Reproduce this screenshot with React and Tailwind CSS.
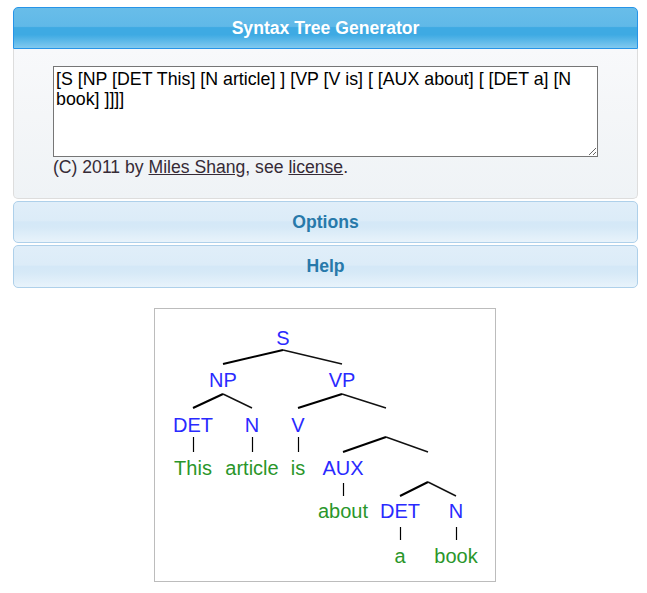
import React from "react";

const BLUE = "#2a2aff";
const GREEN = "#2a962a";

function Tree() {
  const labels = [
    { t: "S", x: 283, y: 345, c: BLUE },
    { t: "NP", x: 223, y: 387, c: BLUE },
    { t: "VP", x: 342, y: 387, c: BLUE },
    { t: "DET", x: 193, y: 432, c: BLUE },
    { t: "N", x: 252, y: 432, c: BLUE },
    { t: "V", x: 298, y: 432, c: BLUE },
    { t: "This", x: 193, y: 475, c: GREEN },
    { t: "article", x: 252, y: 475, c: GREEN },
    { t: "is", x: 298, y: 475, c: GREEN },
    { t: "AUX", x: 343, y: 475, c: BLUE },
    { t: "about", x: 343, y: 518, c: GREEN },
    { t: "DET", x: 400, y: 518, c: BLUE },
    { t: "N", x: 456, y: 518, c: BLUE },
    { t: "a", x: 400, y: 563, c: GREEN },
    { t: "book", x: 456, y: 563, c: GREEN },
  ];
  const thick = [
    [283, 350, 223, 364],
    [223, 394, 193, 408],
    [342, 394, 298, 408],
    [386, 437, 343, 452],
    [428, 482, 400, 496],
  ];
  const thin = [
    [283, 350, 342, 364],
    [223, 394, 252, 408],
    [342, 394, 386, 408],
    [386, 437, 428, 452],
    [428, 482, 456, 496],
  ];
  const vert = [
    [193, 437, 193, 452],
    [252, 437, 252, 452],
    [298, 437, 298, 452],
    [343, 483, 343, 496],
    [400, 527, 400, 540],
    [456, 527, 456, 540],
  ];
  return (
    <svg width="340" height="272" viewBox="0 0 340 272">
      <g transform="translate(-155,-309)">
        {thick.map((l, i) => (
          <line key={"a" + i} x1={l[0]} y1={l[1]} x2={l[2]} y2={l[3]} stroke="#000" strokeWidth="2" />
        ))}
        {thin.map((l, i) => (
          <line key={"b" + i} x1={l[0]} y1={l[1]} x2={l[2]} y2={l[3]} stroke="#111" strokeWidth="1.4" />
        ))}
        {vert.map((l, i) => (
          <line key={"c" + i} x1={l[0] + 0.5} y1={l[1]} x2={l[2] + 0.5} y2={l[3]} stroke="#000" strokeWidth="1.2" />
        ))}
        {labels.map((l, i) => (
          <text
            key={"t" + i}
            x={l.x}
            y={l.y}
            textAnchor="middle"
            fill={l.c}
            fontSize="20"
            fontFamily="'Liberation Sans', Arial, sans-serif"
          >
            {l.t}
          </text>
        ))}
      </g>
    </svg>
  );
}

export default function App() {
  return (
    <div className="w-[647px] h-[593px] bg-white font-['Liberation_Sans',Arial,sans-serif] text-[17.6px]">
      <div className="pt-[7px] pl-[13px] w-[638px]">
        <div className="h-[42px] border border-[#2694e8] rounded-t-[5px] bg-[linear-gradient(to_bottom,#68bde9_0%,#60b9e8_46%,#3eaae3_49%,#3eaae3_67%,#80c9ef_100%)] flex items-center justify-center text-white font-bold">
          Syntax Tree Generator
        </div>
        <div className="h-[150px] border border-t-0 border-[#dddddd] rounded-b-[5px] bg-[linear-gradient(to_bottom,#f8f9fb_0%,#f4f6f8_45%,#eff3f6_100%)] pl-[39px] pr-[40px] pt-[17px] text-[#362b36]">
          <textarea
            className="block w-[545px] h-[91px] border border-[#767676] bg-white px-[2px] py-[2px] text-black text-[17.8px] leading-[20px] resize-y outline-none"
            defaultValue="[S [NP [DET This] [N article] ] [VP [V is] [ [AUX about] [ [DET a] [N book] ]]]]"
            spellCheck={false}
          />
          <div className="leading-[20px]">
            (C) 2011 by <a href="#" className="underline text-[#362b36]">Miles Shang</a>, see{" "}
            <a href="#" className="underline text-[#362b36]">license</a>.
          </div>
        </div>
        <div className="mt-[2px] h-[42px] border border-[#aed0ea] rounded-[5px] bg-[linear-gradient(to_bottom,#e0eef9_0%,#dcecf8_46%,#d4e8f7_50%,#d6e9f7_64%,#e8f3fb_100%)] flex items-center justify-center text-[#2779aa] font-bold">
          Options
        </div>
        <div className="mt-[2px] h-[43px] border border-[#aed0ea] rounded-[5px] bg-[linear-gradient(to_bottom,#e0eef9_0%,#dcecf8_46%,#d4e8f7_50%,#d6e9f7_64%,#e8f3fb_100%)] flex items-center justify-center text-[#2779aa] font-bold">
          Help
        </div>
        <div className="mt-[20px] pl-[141px]">
          <div className="w-[342px] h-[274px] border border-[#bcbcbc] bg-white">
            <Tree />
          </div>
        </div>
      </div>
    </div>
  );
}
